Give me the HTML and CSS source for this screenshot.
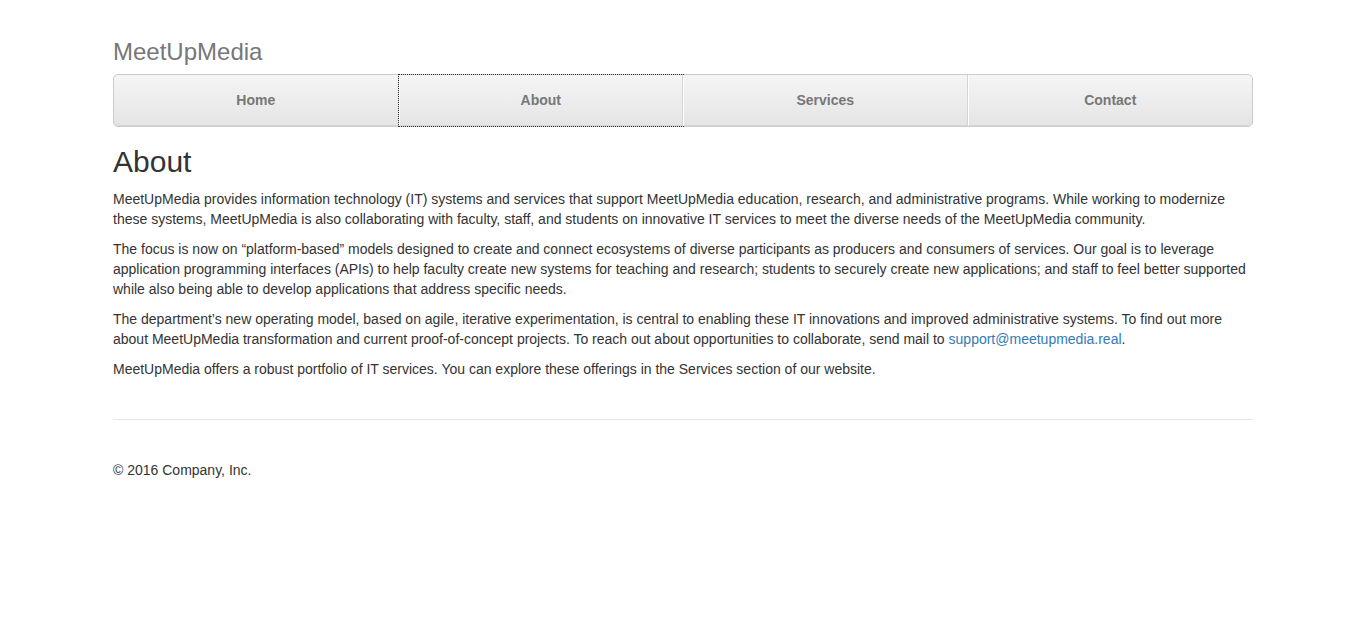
FILE: index.html
```html
<!DOCTYPE html>
<html lang="en">
<head>
<meta charset="utf-8">
<title>MeetUpMedia - About</title>
<link rel="stylesheet" href="styles.css">
</head>
<body>
<div class="container">
  <header class="masthead">
    <h3 class="brand">MeetUpMedia</h3>
    <nav>
      <ul class="nav-justified">
        <li><a href="#">Home</a></li>
        <li><a href="#" class="focused">About</a></li>
        <li><a href="#">Services</a></li>
        <li><a href="#">Contact</a></li>
      </ul>
    </nav>
  </header>

  <main class="content">
    <h2 class="title">About</h2>
    <p>MeetUpMedia provides information technology (IT) systems and services that support MeetUpMedia education, research, and administrative programs. While working to modernize these systems, MeetUpMedia is also collaborating with faculty, staff, and students on innovative IT services to meet the diverse needs of the MeetUpMedia community.</p>
    <p>The focus is now on “platform-based” models designed to create and connect ecosystems of diverse participants as producers and consumers of services. Our goal is to leverage application programming interfaces (APIs) to help faculty create new systems for teaching and research; students to securely create new applications; and staff to feel better supported while also being able to develop applications that address specific needs.</p>
    <p>The department’s new operating model, based on agile, iterative experimentation, is central to enabling these IT innovations and improved administrative systems. To find out more about MeetUpMedia transformation and current proof-of-concept projects. To reach out about opportunities to collaborate, send mail to <a href="#" class="link">support@meetupmedia.real</a>.</p>
    <p>MeetUpMedia offers a robust portfolio of IT services. You can explore these offerings in the Services section of our website.</p>
  </main>

  <footer class="footer">
    <p>© 2016 Company, Inc.</p>
  </footer>
</div>
</body>
</html>
```

FILE: styles.css
```css
html, body {
  margin: 0;
  padding: 0;
  background: #fff;
}

body {
  font-family: "Liberation Sans", Arial, Helvetica, sans-serif;
  font-size: 14px;
  line-height: 20px;
  color: #333;
  padding-left: 10px;
}

.container {
  max-width: 1140px;
  margin: 0 auto;
}

.masthead {
  padding-top: 39px;
}

.brand {
  margin: 0 0 9px;
  font-size: 24px;
  line-height: 26px;
  font-weight: 500;
  color: #777;
}

.nav-justified {
  list-style: none;
  margin: 0;
  padding: 0;
  display: flex;
  border: 1px solid #ccc;
  border-radius: 5px;
  background-color: #eee;
}

.nav-justified li {
  flex: 1 1 0;
  display: flex;
}

.nav-justified a {
  flex: 1;
  display: block;
  padding: 15px 0;
  text-align: center;
  font-weight: bold;
  color: #777;
  text-decoration: none;
  background-color: #e5e5e5;
  background-image: linear-gradient(to bottom, #f5f5f5 0%, #e5e5e5 100%);
  border-bottom: 1px solid #d5d5d5;
  border-right: 1px solid #d5d5d5;
  border-left: 1px solid #fff;
}

.nav-justified li:first-child a {
  border-left: 0;
  border-radius: 5px 0 0 5px;
}

.nav-justified li:last-child a {
  border-right: 0;
  border-radius: 0 5px 5px 0;
}

.nav-justified a.focused {
  outline: 1px dotted #333;
}

.title {
  margin: 18px 0 11px;
  font-size: 30px;
  line-height: 33px;
  font-weight: 500;
  color: #333;
}

.content p {
  margin: 0 0 10px;
}

.link {
  color: #337ab7;
  text-decoration: none;
}

.footer {
  margin-top: 40px;
  padding-top: 40px;
  border-top: 1px solid #e5e5e5;
}

.footer p {
  margin: 0 0 10px;
}
```
